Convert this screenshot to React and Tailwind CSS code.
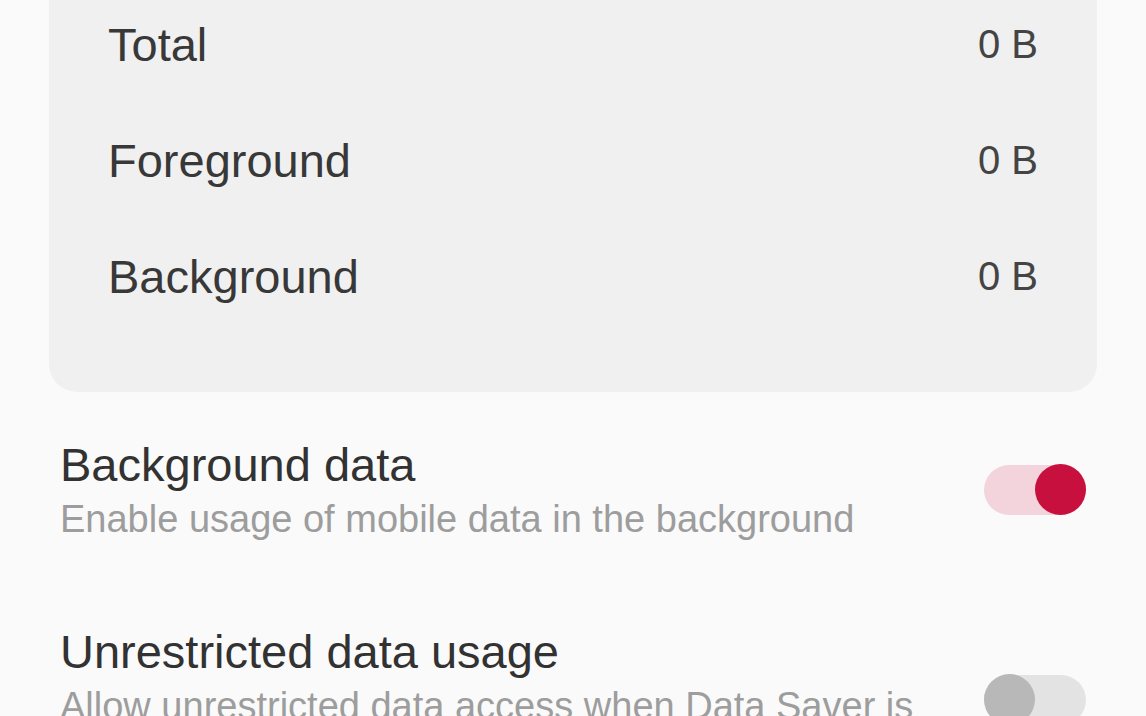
import React from "react";

const font = { fontFamily: '"Liberation Sans", Arial, sans-serif' };

function StatRow({ label, value }) {
  return (
    <div className="flex h-[116px] items-center justify-between">
      <span className="text-[47px] leading-[55px] text-[#383838]">{label}</span>
      <span className="text-[40px] leading-[48px] text-[#444444]">{value}</span>
    </div>
  );
}

function Toggle({ on }) {
  return (
    <div
      className={
        "flex h-[50px] w-[102px] shrink-0 items-center rounded-full " +
        (on ? "justify-end bg-[#f3d3dc]" : "justify-start bg-[#e3e3e3]")
      }
    >
      <div
        className={
          "h-[51px] w-[51px] rounded-full " + (on ? "bg-[#c8103e]" : "bg-[#b8b8b8]")
        }
      />
    </div>
  );
}

function SettingRow({ title, subtitle, on }) {
  return (
    <div className="flex items-center justify-between py-[41px]">
      <div className="w-[880px]">
        <div className="text-[47px] leading-[55px] text-[#323232]">{title}</div>
        <div className="mt-[4px] text-[38px] leading-[46px] text-[#9d9d9d]">{subtitle}</div>
      </div>
      <Toggle on={on} />
    </div>
  );
}

export default function App() {
  return (
    <div className="h-[716px] w-full overflow-hidden bg-[#fafafa]" style={font}>
      <div className="mx-[49px] -mt-[30px] rounded-[28px] bg-[#f0f0f0] px-[59px] pb-[58px] pt-[16px]">
        <StatRow label="Total" value="0 B" />
        <StatRow label="Foreground" value="0 B" />
        <StatRow label="Background" value="0 B" />
      </div>
      <div className="mt-[4px] px-[60px]">
        <SettingRow
          title="Background data"
          subtitle="Enable usage of mobile data in the background"
          on
        />
        <SettingRow
          title="Unrestricted data usage"
          subtitle="Allow unrestricted data access when Data Saver is on"
          on={false}
        />
      </div>
    </div>
  );
}
